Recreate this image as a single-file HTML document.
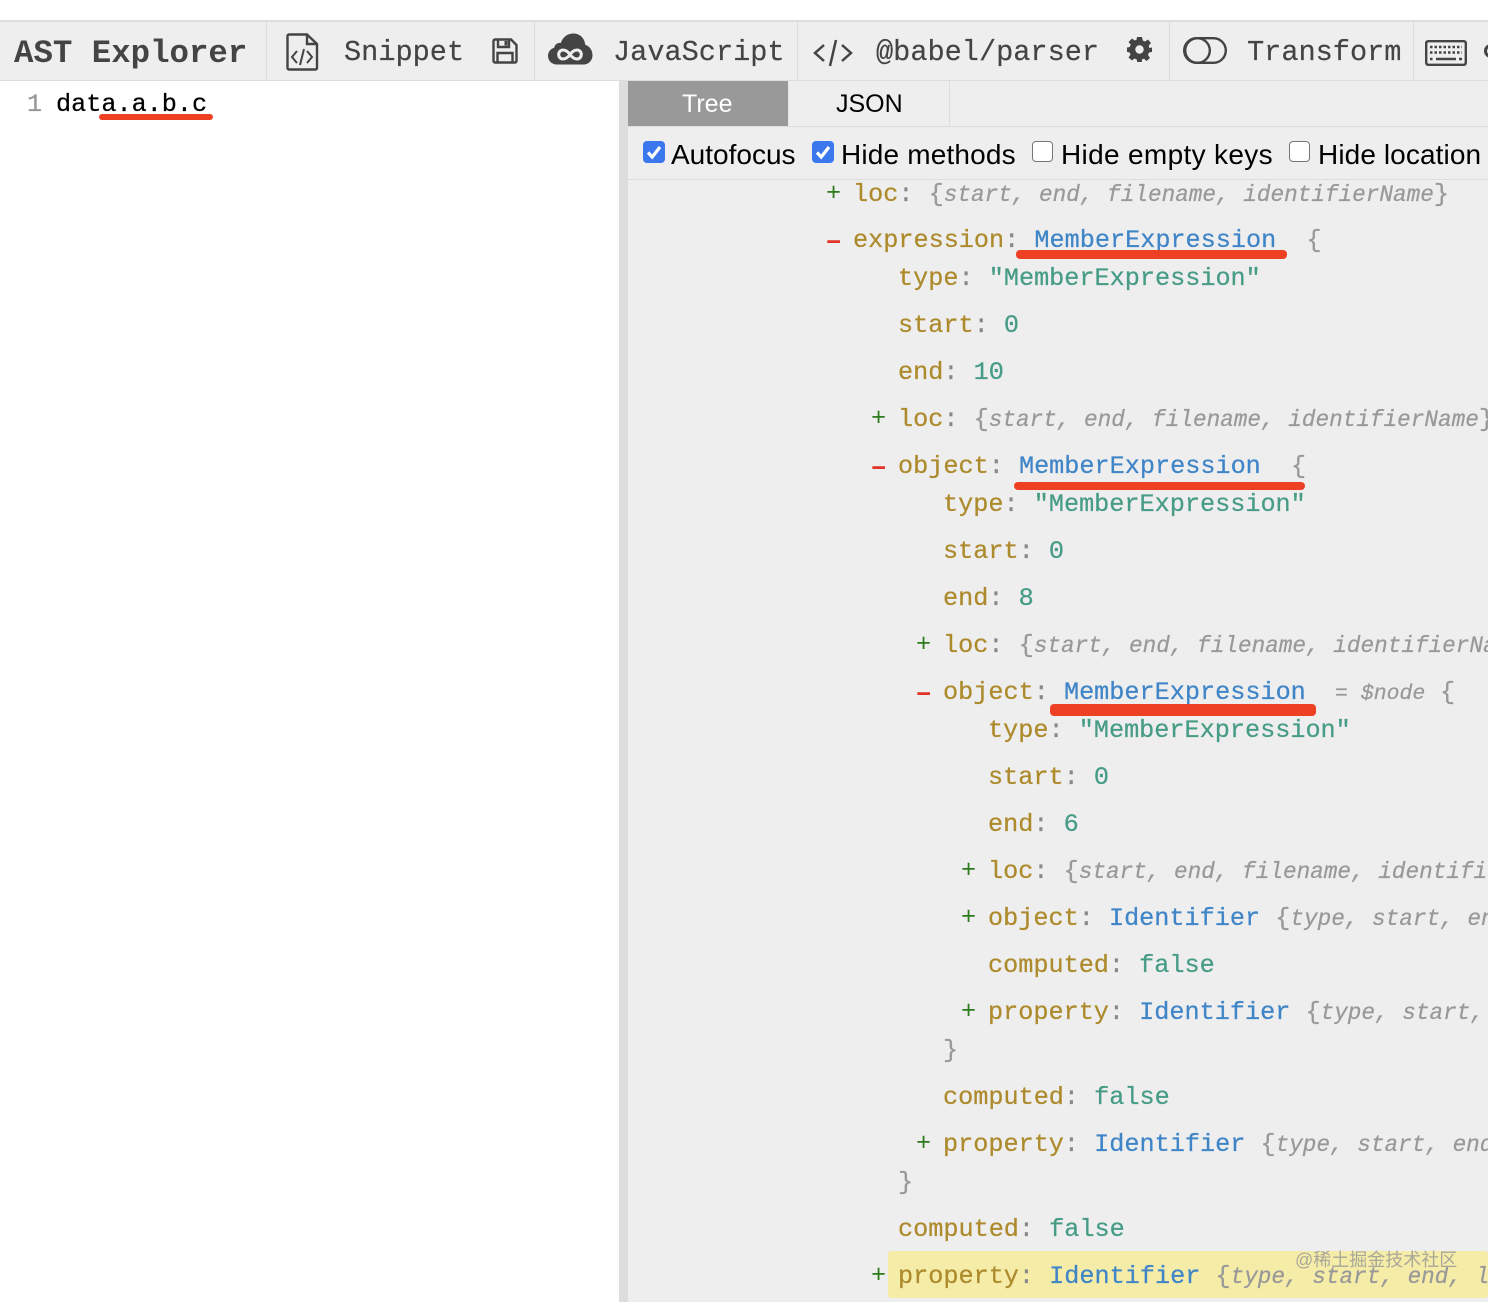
<!DOCTYPE html>
<html><head><meta charset="utf-8"><style>
html,body{margin:0;padding:0;background:#fff}
#p{position:relative;width:1488px;height:1302px;overflow:hidden;background:#fff;font-family:"Liberation Mono",monospace}
#p div{position:absolute}
#p svg{position:absolute;overflow:visible}
.t{font-size:28.6px;line-height:36px;color:#444;white-space:pre;top:35px;-webkit-text-stroke:.2px #444}
.s{width:1px;top:21px;height:59px;background:#ddd}
.c{font-family:"Liberation Sans","Helvetica",sans-serif;font-size:28px;line-height:36px;color:#000;white-space:pre;top:137px}
.b{width:22px;height:22px;top:141px;border-radius:4px;background:#3b78ee}
.u{width:19px;height:19px;top:141px;border-radius:4px;background:#fff;border:1.5px solid #767676}
.l{font-size:25.2px;line-height:30px;white-space:pre;color:#888;letter-spacing:0;-webkit-text-stroke:.25px}
.k{color:#ad8a2c}.n{color:#3f85c7}.v{color:#479c86}.i{color:#999;font-style:italic;font-size:22.7px}.g{color:#999}.o{color:#888}
.p{font-size:25.2px;line-height:30px;color:#2c7a1c;transform:translateY(-1px)}
.m{font-size:25.2px;line-height:30px;color:#e2342a;font-weight:bold;transform:translateY(2px)}
.r{background:#ee4023;border-radius:4px}
</style></head><body><div id="p">
<div style="left:0;top:20px;width:1488px;height:61px;background:#eee;border-top:2px solid #ddd;border-bottom:1px solid #ddd;box-sizing:border-box"></div>
<div class="s" style="left:266px"></div><div class="s" style="left:534px"></div><div class="s" style="left:797px"></div><div class="s" style="left:1169px"></div><div class="s" style="left:1413px"></div>
<div class="t" style="left:14px;top:36px;font-weight:bold;font-size:32.4px;-webkit-text-stroke:0">AST Explorer</div>
<svg style="left:286px;top:33px" width="32" height="38" viewBox="0 0 32 38" fill="none" stroke="#444" stroke-width="2.400"><path d="M3 1.500H21L31 11V35a1.500 1.500 0 0 1-1.500 1.500H3A1.500 1.500 0 0 1 1.500 35V3A1.500 1.500 0 0 1 3 1.500Z"/><path d="M21 1.500V11H31"/><path d="M11 18L6 24L11 30M21 18L26 24L21 30M18 16L14 32" stroke-width="2"/></svg>
<div class="t" style="left:344px">Snippet</div>
<svg style="left:492px;top:38px" width="26" height="26" viewBox="0 0 26 26" fill="none" stroke="#444" stroke-width="2.400"><path d="M3 1.500H19L24.500 7V23a1.500 1.500 0 0 1-1.500 1.500H3A1.500 1.500 0 0 1 1.500 23V3A1.500 1.500 0 0 1 3 1.500Z"/><path d="M6 2V9H17V2"/><path d="M5.500 24V15H20.500V24"/><rect x="12.500" y="3" width="3" height="4.500" fill="#444" stroke="none"/></svg>
<svg style="left:548px;top:33px" width="45" height="32" viewBox="0 0 45 32"><path fill="#444" d="M9 31.500C3.500 31.500 0 27.500 0 23C0 19 2.500 15.800 6.200 14.800C6.800 11.500 9.500 9.500 12.800 10C14.800 4 19.500 0.500 25.500 0.500C32 0.500 36.800 5.500 37.200 11.800C41.700 13 44.500 17.500 44.500 22.500C44.500 27.500 40.500 31.500 35.500 31.500Z"/><path fill="none" stroke="#eee" stroke-width="3" d="M22 21.500C19.500 18 17.500 17 15 17C12.500 17 10.700 19 10.700 21.500C10.700 24 12.500 26 15 26C17.500 26 19.500 25 22 21.500C24.500 18 26.500 17 29 17C31.500 17 33.300 19 33.300 21.500C33.300 24 31.500 26 29 26C26.500 26 24.500 25 22 21.500Z"/></svg>
<div class="t" style="left:613px">JavaScript</div>
<svg style="left:813px;top:39px" width="40" height="28" viewBox="0 0 40 28" fill="none" stroke="#444" stroke-width="2.500"><path d="M11 6L2 14L11 22M29 6L38 14L29 22M23 1L17 27"/></svg>
<div class="t" style="left:876px">@babel/parser</div>
<svg style="left:1127px;top:37px" width="25" height="25" viewBox="0 0 25 25"><path fill="#444" fill-rule="evenodd" d="M10 0H15L15.800 3.500L18 4.500L21 2.500L24 6L21.700 8.700L22.500 11L25 10.500V15L22 15.500L21 18L23 21L19.500 24L17 21.700L15 22.500L14.800 25H10.200L9.700 22.500L7.500 21.500L5 23.500L1.500 20.500L3.500 17.500L2.700 15.500L0 15V10.500L2.700 10L3.700 7.500L1.500 5L5 1.500L7.700 3.500L9.500 2.700Z M12.500 8.300A4.200 4.200 0 1 0 12.501 16.700A4.200 4.200 0 1 0 12.500 8.300Z"/></svg>
<svg style="left:1183px;top:37px" width="44" height="27" viewBox="0 0 44 27" fill="none" stroke="#444" stroke-width="2.400"><rect x="1.200" y="1.200" width="41.600" height="24.600" rx="12.300"/><circle cx="14.500" cy="13.500" r="12.300"/></svg>
<div class="t" style="left:1247px">Transform</div>
<svg style="left:1425px;top:40px" width="42" height="26" viewBox="0 0 42 26" fill="none" stroke="#444" stroke-width="2.400"><rect x="1.200" y="1.200" width="39.600" height="23.600" rx="2"/><path d="M5 7H37M5 12.500H37" stroke-width="2.500" stroke-dasharray="2.500 2"/><path d="M5 19H7.500M11 19H31M34 19H37" stroke-width="2.500"/></svg>
<div style="left:1484px;top:44px;width:14px;height:14px;border-radius:50%;border:3px solid #444;box-sizing:border-box"></div>

<div style="left:619px;top:81px;width:9px;height:1221px;background:#ddd"></div>
<div style="left:628px;top:81px;width:860px;height:1221px;background:#eee"></div>
<div style="left:628px;top:81px;width:160px;height:45px;background:#999"></div>
<div style="left:949px;top:81px;width:1px;height:45px;background:#ddd"></div>
<div style="left:788px;top:81px;width:1px;height:45px;background:#e6e6e6"></div>
<div style="left:628px;top:126px;width:860px;height:1px;background:#ddd"></div>
<div style="left:628px;top:179px;width:860px;height:1px;background:#ddd"></div>
<div class="c" style="left:682px;top:86px;color:#fff;font-size:25px">Tree</div>
<div class="c" style="left:836px;top:86px;font-size:25px">JSON</div>
<div class="b" style="left:643px"></div><svg style="left:643px;top:141px" width="22" height="22" viewBox="0 0 22 22" fill="none" stroke="#fff" stroke-width="3.200"><path d="M5 11.500L9.200 16L17 6"/></svg>
<div class="c" style="left:671px">Autofocus</div>
<div class="b" style="left:812px"></div><svg style="left:812px;top:141px" width="22" height="22" viewBox="0 0 22 22" fill="none" stroke="#fff" stroke-width="3.200"><path d="M5 11.500L9.200 16L17 6"/></svg>
<div class="c" style="left:841px;letter-spacing:.17px">Hide methods</div>
<div class="u" style="left:1032px"></div>
<div class="c" style="left:1061px;letter-spacing:.33px">Hide empty keys</div>
<div class="u" style="left:1289px"></div>
<div class="c" style="left:1318px;letter-spacing:.1px">Hide location</div>

<div class="l" style="left:27px;top:90px;color:#999">1</div>
<div class="l" style="left:56px;top:90px;color:#000">data.a.b.c</div>
<div class="r" style="left:99px;top:114px;width:114px;height:6px"></div>

<div style="left:888px;top:1251px;width:600px;height:47px;background:#f5eca8;border-radius:3px"></div>

<div style="left:0;top:4px;width:1488px;height:1298px">
<div class="p" style="left:826px;top:176px">+</div><div class="l" style="left:853px;top:176px"><span class="k">loc</span><span class="o">:</span> <span class="g">{</span><span class="i">start, end, filename, identifierName</span><span class="g">}</span></div>
<div class="m" style="left:826px;top:223px">−</div><div class="l" style="left:853px;top:222px"><span class="k">expression</span><span class="o">:</span> <span class="n">MemberExpression</span>  <span class="g">{</span></div>
<div class="l" style="left:898px;top:260px"><span class="k">type</span><span class="o">:</span> <span class="v">"MemberExpression"</span></div>
<div class="l" style="left:898px;top:307px"><span class="k">start</span><span class="o">:</span> <span class="v">0</span></div>
<div class="l" style="left:898px;top:354px"><span class="k">end</span><span class="o">:</span> <span class="v">10</span></div>
<div class="p" style="left:871px;top:401px">+</div><div class="l" style="left:898px;top:401px"><span class="k">loc</span><span class="o">:</span> <span class="g">{</span><span class="i">start, end, filename, identifierName</span><span class="g">}</span></div>
<div class="m" style="left:871px;top:449px">−</div><div class="l" style="left:898px;top:448px"><span class="k">object</span><span class="o">:</span> <span class="n">MemberExpression</span>  <span class="g">{</span></div>
<div class="l" style="left:943px;top:486px"><span class="k">type</span><span class="o">:</span> <span class="v">"MemberExpression"</span></div>
<div class="l" style="left:943px;top:533px"><span class="k">start</span><span class="o">:</span> <span class="v">0</span></div>
<div class="l" style="left:943px;top:580px"><span class="k">end</span><span class="o">:</span> <span class="v">8</span></div>
<div class="p" style="left:916px;top:627px">+</div><div class="l" style="left:943px;top:627px"><span class="k">loc</span><span class="o">:</span> <span class="g">{</span><span class="i">start, end, filename, identifierName</span><span class="g">}</span></div>
<div class="m" style="left:916px;top:675px">−</div><div class="l" style="left:943px;top:674px"><span class="k">object</span><span class="o">:</span> <span class="n">MemberExpression</span></div>
<div class="l i" style="left:1335px;top:675px;font-size:21.5px">= $node</div>
<div class="l g" style="left:1440px;top:674px">{</div>
<div class="l" style="left:988px;top:712px"><span class="k">type</span><span class="o">:</span> <span class="v">"MemberExpression"</span></div>
<div class="l" style="left:988px;top:759px"><span class="k">start</span><span class="o">:</span> <span class="v">0</span></div>
<div class="l" style="left:988px;top:806px"><span class="k">end</span><span class="o">:</span> <span class="v">6</span></div>
<div class="p" style="left:961px;top:853px">+</div><div class="l" style="left:988px;top:853px"><span class="k">loc</span><span class="o">:</span> <span class="g">{</span><span class="i">start, end, filename, identifierName</span><span class="g">}</span></div>
<div class="p" style="left:961px;top:900px">+</div><div class="l" style="left:988px;top:900px"><span class="k">object</span><span class="o">:</span> <span class="n">Identifier</span> <span class="g">{</span><span class="i">type, start, end</span></div>
<div class="l" style="left:988px;top:947px"><span class="k">computed</span><span class="o">:</span> <span class="v">false</span></div>
<div class="p" style="left:961px;top:994px">+</div><div class="l" style="left:988px;top:994px"><span class="k">property</span><span class="o">:</span> <span class="n">Identifier</span> <span class="g">{</span><span class="i">type, start, end</span></div>
<div class="l g" style="left:943px;top:1032px">}</div>
<div class="l" style="left:943px;top:1079px"><span class="k">computed</span><span class="o">:</span> <span class="v">false</span></div>
<div class="p" style="left:916px;top:1126px">+</div><div class="l" style="left:943px;top:1126px"><span class="k">property</span><span class="o">:</span> <span class="n">Identifier</span> <span class="g">{</span><span class="i">type, start, end</span></div>
<div class="l g" style="left:898px;top:1164px">}</div>
<div class="l" style="left:898px;top:1211px"><span class="k">computed</span><span class="o">:</span> <span class="v">false</span></div>
<div class="p" style="left:871px;top:1258px">+</div><div class="l" style="left:898px;top:1258px"><span class="k">property</span><span class="o">:</span> <span class="n">Identifier</span> <span class="g">{</span><span class="i">type, start, end, loc</span></div>
</div>
<div style="left:1295px;top:1248px;font-family:'Liberation Sans','Noto Sans CJK SC',sans-serif;font-size:18px;line-height:24px;color:#a9a79a;white-space:pre">@稀土掘金技术社区</div>

<div class="r" style="left:1016px;top:250px;width:271px;height:9px"></div>
<div class="r" style="left:1014px;top:482px;width:291px;height:8px"></div>
<div class="r" style="left:1050px;top:704px;width:266px;height:12px"></div>
</div></body></html>
